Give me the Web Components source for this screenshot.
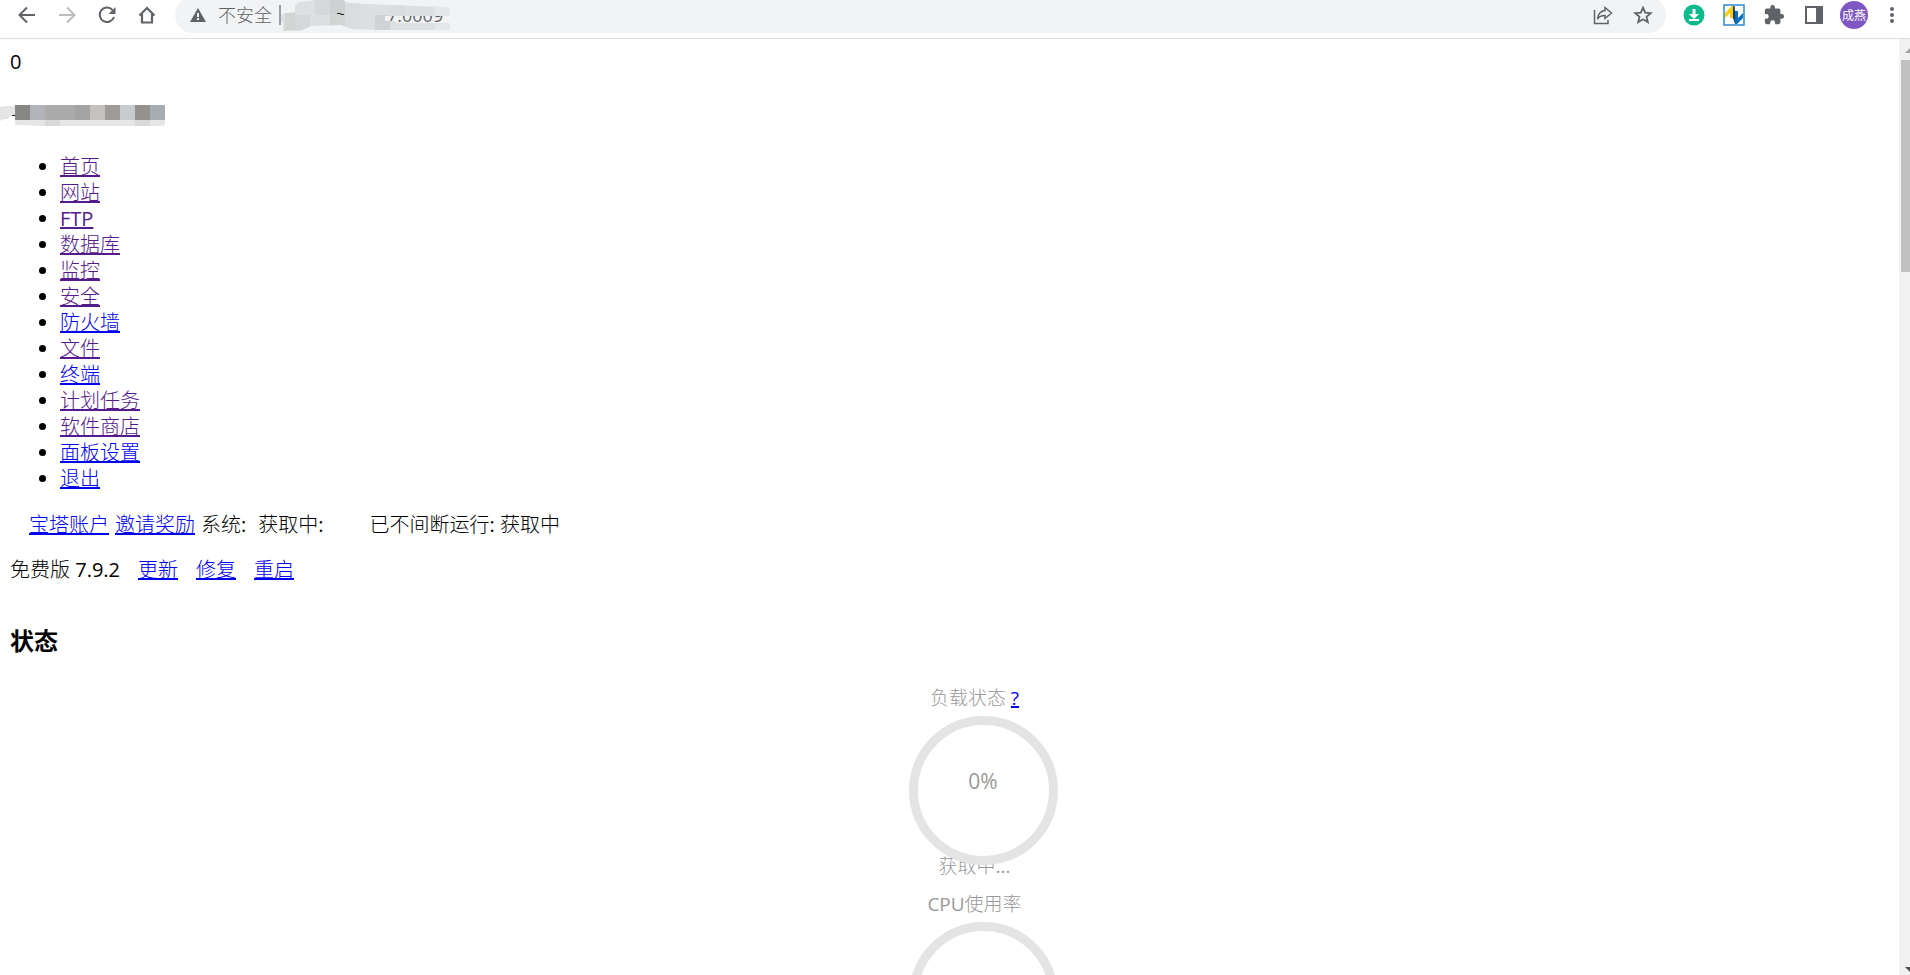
<!DOCTYPE html>
<html lang="zh-CN">
<head>
<meta charset="utf-8">
<title>面板</title>
<style>
	html, body {
		height: 100%;
		margin: 0;
	}

	body {
		font-family: "Open Sans", "Noto Sans CJK SC Light", "Noto Sans CJK SC", sans-serif;
		font-size: 20px;
		line-height: 26px;
		color: #000;
		background: #fff;
	}
</style>
</head>
<body>

<panel-app></panel-app>

<script>
const define = (name, html) => {
	const template = document.createElement('template');
	template.innerHTML = html;

	customElements.define(name, class extends HTMLElement {

		constructor() {
			super();

			this.attachShadow({ mode: 'open' });
			this.shadowRoot.appendChild(template.content.cloneNode(true));
		}

	});
};

define('tool-button', `
	<style>
		:host {
			display: block;
			flex: none;
			width: 40px;
		}

		button {
			display: flex;
			align-items: center;
			justify-content: center;
			width: 100%;
			height: 36px;
			padding: 0;

			color: #5f6368;
			background: none;
			border: none;
		}
	</style>
	<button type="button"><slot></slot></button>
`);

define('address-bar', `
	<style>
		:host {
			display: flex;
			align-items: center;
			flex: 1;
			height: 36px;
			padding-left: 15px;
			margin: 0 8px;
			box-sizing: border-box;
			overflow: hidden;

			font-size: 18px;
			color: #5f6368;
			background: #f1f3f4;
			border-radius: 18px;
		}

		.label {
			margin: 0 7px 0 12px;
		}

		.divider {
			width: 2px;
			height: 20px;
			background: #9aa0a6;
		}

		.host {
			flex: 1;
			height: 36px;
		}
	</style>
	<svg width="16" height="16" viewBox="0 0 16 16" aria-hidden="true">
		<path fill="#5f6368" fill-rule="evenodd" d="M8 1l8 14H0zM7 6v4h2V6zM7 11v2h2v-2z"></path>
	</svg>
	<span class="label">不安全</span>
	<span class="divider"></span>
	<span class="host">
		<svg width="176" height="36" viewBox="281 -3 176 36" aria-hidden="true">
			<text x="387" y="22" font-size="18" fill="#5f6368">7:0009</text>
			<clipPath id="smear">
				<path d="M279 20l2-5 5-2 9-1V5l4-3 12-1 10-3h18l9 5 40 2 57 2 5 1v8h-65v5h8l5 2h52v7h-75l-22-1-12-4-30 1-11 5h-17v-8z"></path>
			</clipPath>
			<g clip-path="url(#smear)">
				<path d="M279-3h180v36H279z" fill="#dddfe0"></path>
				<path d="M315-3h15v18h-15zM295 15h15v15h-15z" fill="#d5d8da"></path>
				<path d="M330-3h15v18h-15z" fill="#cdd1d2"></path>
				<path d="M285 13h10v17h-10zM330 15h15v15h-15z" fill="#d3d5d5"></path>
				<path d="M345-3h15v33h-15zM390 0h15v17h-15z" fill="#dadddf"></path>
				<path d="M375 15h15v15h-15z" fill="#d0d2d3"></path>
				<path d="M435 0h20v33h-20z" fill="#e5e8e9"></path>
			</g>
			<path d="M337 13h3l2 1h2v1h-3l-1-1h-3z" fill="#222"></path>
		</svg>
	</span>
	<slot></slot>
`);

define('browser-bar', `
	<style>
		:host {
			display: flex;
			align-items: flex-end;
			height: 38px;
			padding: 0 0 5px 7px;
			box-sizing: border-box;
			overflow: hidden;
			flex: none;

			background: #fff;
		}

		address-bar tool-button:last-child {
			margin-right: 3px;
		}

		.menu {
			width: 36px;
		}

		.avatar {
			display: flex;
			align-items: center;
			justify-content: center;
			width: 28px;
			height: 28px;

			font-family: "Noto Sans CJK SC", sans-serif;
			font-size: 12px;
			line-height: 28px;
			color: #fff;
			background: #7e57c2;
			border-radius: 50%;
		}
	</style>
	<tool-button aria-label="后退">
		<svg width="20" height="20" viewBox="0 0 20 20" fill="none" stroke="#5f6368" stroke-width="2"><path d="M18 10H3M10 2.500l-7.500 7.500 7.500 7.500"></path></svg>
	</tool-button>
	<tool-button aria-label="前进">
		<svg width="20" height="20" viewBox="0 0 20 20" fill="none" stroke="#babcbe" stroke-width="2"><path d="M2 10h15M10 2.500l7.500 7.500-7.500 7.500"></path></svg>
	</tool-button>
	<tool-button aria-label="重新加载">
		<svg width="20" height="20" viewBox="0 0 20 20"><path d="M15.500 4.800A7.300 7.300 0 1 0 17 12" fill="none" stroke="#5f6368" stroke-width="2"></path><path d="M18.500 2v7h-7z" fill="#5f6368"></path></svg>
	</tool-button>
	<tool-button aria-label="主页">
		<svg width="20" height="20" viewBox="0 0 20 20" fill="none" stroke="#5f6368" stroke-width="2.200"><path d="M2.500 10.500L10 3l7.500 7.500M5 9v8.500h10V9"></path></svg>
	</tool-button>
	<address-bar>
		<tool-button aria-label="分享">
			<svg width="20" height="20" viewBox="0 0 20 20" fill="none" stroke="#5f6368" stroke-width="1.500"><path d="M1.500 5v13.500H15V15"></path><path d="M12 2.500l6.500 5.500L12 13.500V10.500c-4 0-6 1-7.500 3.500C5 9.500 7.500 6 12 5.500z"></path></svg>
		</tool-button>
		<tool-button aria-label="收藏">
			<svg width="20" height="20" viewBox="0 0 20 20" fill="none" stroke="#5f6368" stroke-width="1.800"><path d="M10 2.700l2.200 5 5.500.5-4.200 3.600 1.300 5.400-4.800-2.900-4.800 2.900 1.300-5.400-4.200-3.600 5.500-.5z"></path></svg>
		</tool-button>
	</address-bar>
	<tool-button aria-label="下载">
		<svg width="22" height="22" viewBox="0 0 22 22"><circle cx="11" cy="11" r="10.500" fill="#0cba8d"></circle><path d="M9.500 5h3v5H16l-5 5-5-5h3.500zM6 15h10v2H6z" fill="#fff"></path></svg>
	</tool-button>
	<tool-button aria-label="扩展">
		<svg width="22" height="22" viewBox="0 0 22 22"><path d="M1 1h20v20H1z" fill="#fff" stroke="#2f88d0" stroke-width="1.500"></path><path d="M2 9l7-7h2v12H7V9l-5 5z" fill="#fc0"></path><path d="M10 2h1.500l2 18H12l-2-6z" fill="#173e68"></path><path d="M12 20V7h3v7l5-5v5l-6 6z" fill="#0a6cbd"></path></svg>
	</tool-button>
	<tool-button aria-label="扩展程序">
		<svg width="22" height="22" viewBox="0 0 24 24"><path fill="#5f6368" d="M20.500 11H19V7a2 2 0 0 0-2-2h-4V3.500a2.500 2.500 0 0 0-5 0V5H4a2 2 0 0 0-2 2v3.800h1.500a2.700 2.700 0 0 1 0 5.400H2V20a2 2 0 0 0 2 2h3.800v-1.500a2.700 2.700 0 0 1 5.400 0V22H17a2 2 0 0 0 2-2v-4h1.500a2.500 2.500 0 0 0 0-5z"></path></svg>
	</tool-button>
	<tool-button aria-label="侧边栏">
		<svg width="18" height="18" viewBox="0 0 18 18"><path fill="#5f6368" fill-rule="evenodd" d="M0 0h18v18H0zM2 2v14h9V2z"></path></svg>
	</tool-button>
	<tool-button aria-label="用户"><span class="avatar">成燕</span></tool-button>
	<tool-button class="menu" aria-label="菜单">
		<svg width="4" height="18" viewBox="0 0 4 18" fill="#5f6368"><circle cx="2" cy="3" r="2"></circle><circle cx="2" cy="9" r="2"></circle><circle cx="2" cy="15" r="2"></circle></svg>
	</tool-button>
`);

// <nav-item visited> draws its link in the visited colour
define('nav-item', `
	<style>
		:host {
			display: list-item;
			list-style: disc;
		}

		a {
			color: #00e;
			text-decoration-thickness: 2px;
		}

		:host([visited]) a {
			color: #551a8b;
		}
	</style>
	<a href="#"><slot></slot></a>
`);

define('load-gauge', `
	<style>
		:host {
			display: grid;
			justify-items: center;
			position: relative;
			height: 206px;
			box-sizing: border-box;

			font-size: 19px;
			color: #999;
		}

		.ring {
			display: flex;
			justify-content: center;
			position: absolute;
			top: 31px;
			left: calc(50% - 66px);
			width: 149px;
			height: 149px;
			padding-top: 43px;
			box-sizing: border-box;

			font-size: 21px;
			border: 9px solid #e4e4e4;
			border-radius: 50%;
		}

		.name {
			align-self: start;
		}

		.note {
			align-self: end;
			margin-bottom: 12px;
		}
	</style>
	<span class="name"><slot name="name"></slot></span>
	<span class="note"><slot name="note"></slot></span>
	<div class="ring"><slot></slot></div>
`);

define('scroll-rail', `
	<style>
		:host {
			display: flex;
			flex-direction: column;
			flex: none;
			width: 11px;
			overflow: hidden;

			background: #f1f1f1;
		}

		svg {
			flex: none;
			align-self: flex-end;
		}

		.thumb {
			height: 212px;
			margin: 0 0 auto 2px;

			background: #c1c1c1;
		}
	</style>
	<svg width="5" height="21" viewBox="0 0 5 21"><path d="M0 14l5-5v5z" fill="#a3a3a3"></path></svg>
	<div class="thumb"></div>
	<svg width="5" height="8" viewBox="0 0 5 8"><path d="M0 0h5v5z" fill="#505050"></path></svg>
`);

define('panel-app', `
	<style>
		:host {
			display: flex;
			flex-direction: column;
			height: 100vh;
			overflow: hidden;
		}

		.view {
			display: flex;
			flex: 1;
			min-height: 0;

			border-top: 1px solid #dadce0;
		}

		main {
			flex: 1;
			padding: 10px;
			overflow: hidden;
		}

		a {
			color: #00e;
			text-decoration-thickness: 2px;
		}

		.count {
			margin-bottom: 30px;
		}

		.masked {
			display: block;
			margin: 0 0 27px -10px;
		}

		.nav {
			padding-left: 50px;
			margin-bottom: 20px;
		}

		.info,
		.version {
			display: flex;
			margin-bottom: 19px;

			white-space: pre;
		}

		.info {
			gap: 6px;
			padding-left: 19px;
		}

		.info .fetching {
			margin: 0 40px 0 6px;
		}

		.version {
			gap: 18px;
			margin-bottom: 45px;
		}

		h3 {
			margin: 0 0 31px;

			font-family: "Open Sans", "Noto Sans CJK SC", sans-serif;
			font-size: 24px;
			line-height: 26px;
		}

		.gauges {
			padding-left: 50px;
		}
	</style>
	<browser-bar></browser-bar>
	<div class="view">
		<main>
			<div class="count">0</div>
			<svg class="masked" width="166" height="22" viewBox="0 0 166 22" aria-hidden="true">
				<path d="M0 2l5-1h10v9l-5 1-2 3H4l-4 2z" fill="#e5e5e5"></path>
				<path d="M15 15h150v5l-4 1H45l-30-1z" fill="#e5e6e6"></path>
				<path d="M45 15h15v6H45zM135 15h15v6h-15z" fill="#d8dad9"></path>
				<path d="M12 10h3v1h-3z" fill="#222"></path>
				<path d="M15 0h15v15H15z" fill="#868683"></path>
				<path d="M30 0h15v15H30z" fill="#b3b4ba"></path>
				<path d="M45 0h30v15H45z" fill="#ababab"></path>
				<path d="M75 0h15v15H75z" fill="#a3a3a3"></path>
				<path d="M90 0h15v15H90z" fill="#c5c1be"></path>
				<path d="M105 0h15v15h-15z" fill="#9e9c9a"></path>
				<path d="M120 0h15v15h-15z" fill="#c7cbce"></path>
				<path d="M135 0h15v15h-15z" fill="#94928d"></path>
				<path d="M150 0h15v15h-15z" fill="#a8adb3"></path>
			</svg>
			<div class="nav" role="list">
				<nav-item visited>首页</nav-item>
				<nav-item visited>网站</nav-item>
				<nav-item visited>FTP</nav-item>
				<nav-item visited>数据库</nav-item>
				<nav-item visited>监控</nav-item>
				<nav-item visited>安全</nav-item>
				<nav-item>防火墙</nav-item>
				<nav-item visited>文件</nav-item>
				<nav-item>终端</nav-item>
				<nav-item visited>计划任务</nav-item>
				<nav-item visited>软件商店</nav-item>
				<nav-item>面板设置</nav-item>
				<nav-item>退出</nav-item>
			</div>
			<div class="info"><a href="#">宝塔账户</a><a href="#">邀请奖励</a><span>系统:</span><span class="fetching">获取中:</span><span>已不间断运行: 获取中</span></div>
			<div class="version"><span>免费版 7.9.2</span><a href="#">更新</a><a href="#">修复</a><a href="#">重启</a></div>
			<h3>状态</h3>
			<div class="gauges">
				<load-gauge><span slot="name">负载状态 <a href="#">?</a></span><span slot="note">获取中...</span>0%</load-gauge>
				<load-gauge><span slot="name">CPU使用率</span></load-gauge>
			</div>
		</main>
		<scroll-rail></scroll-rail>
	</div>
`);
</script>
</body>
</html>
